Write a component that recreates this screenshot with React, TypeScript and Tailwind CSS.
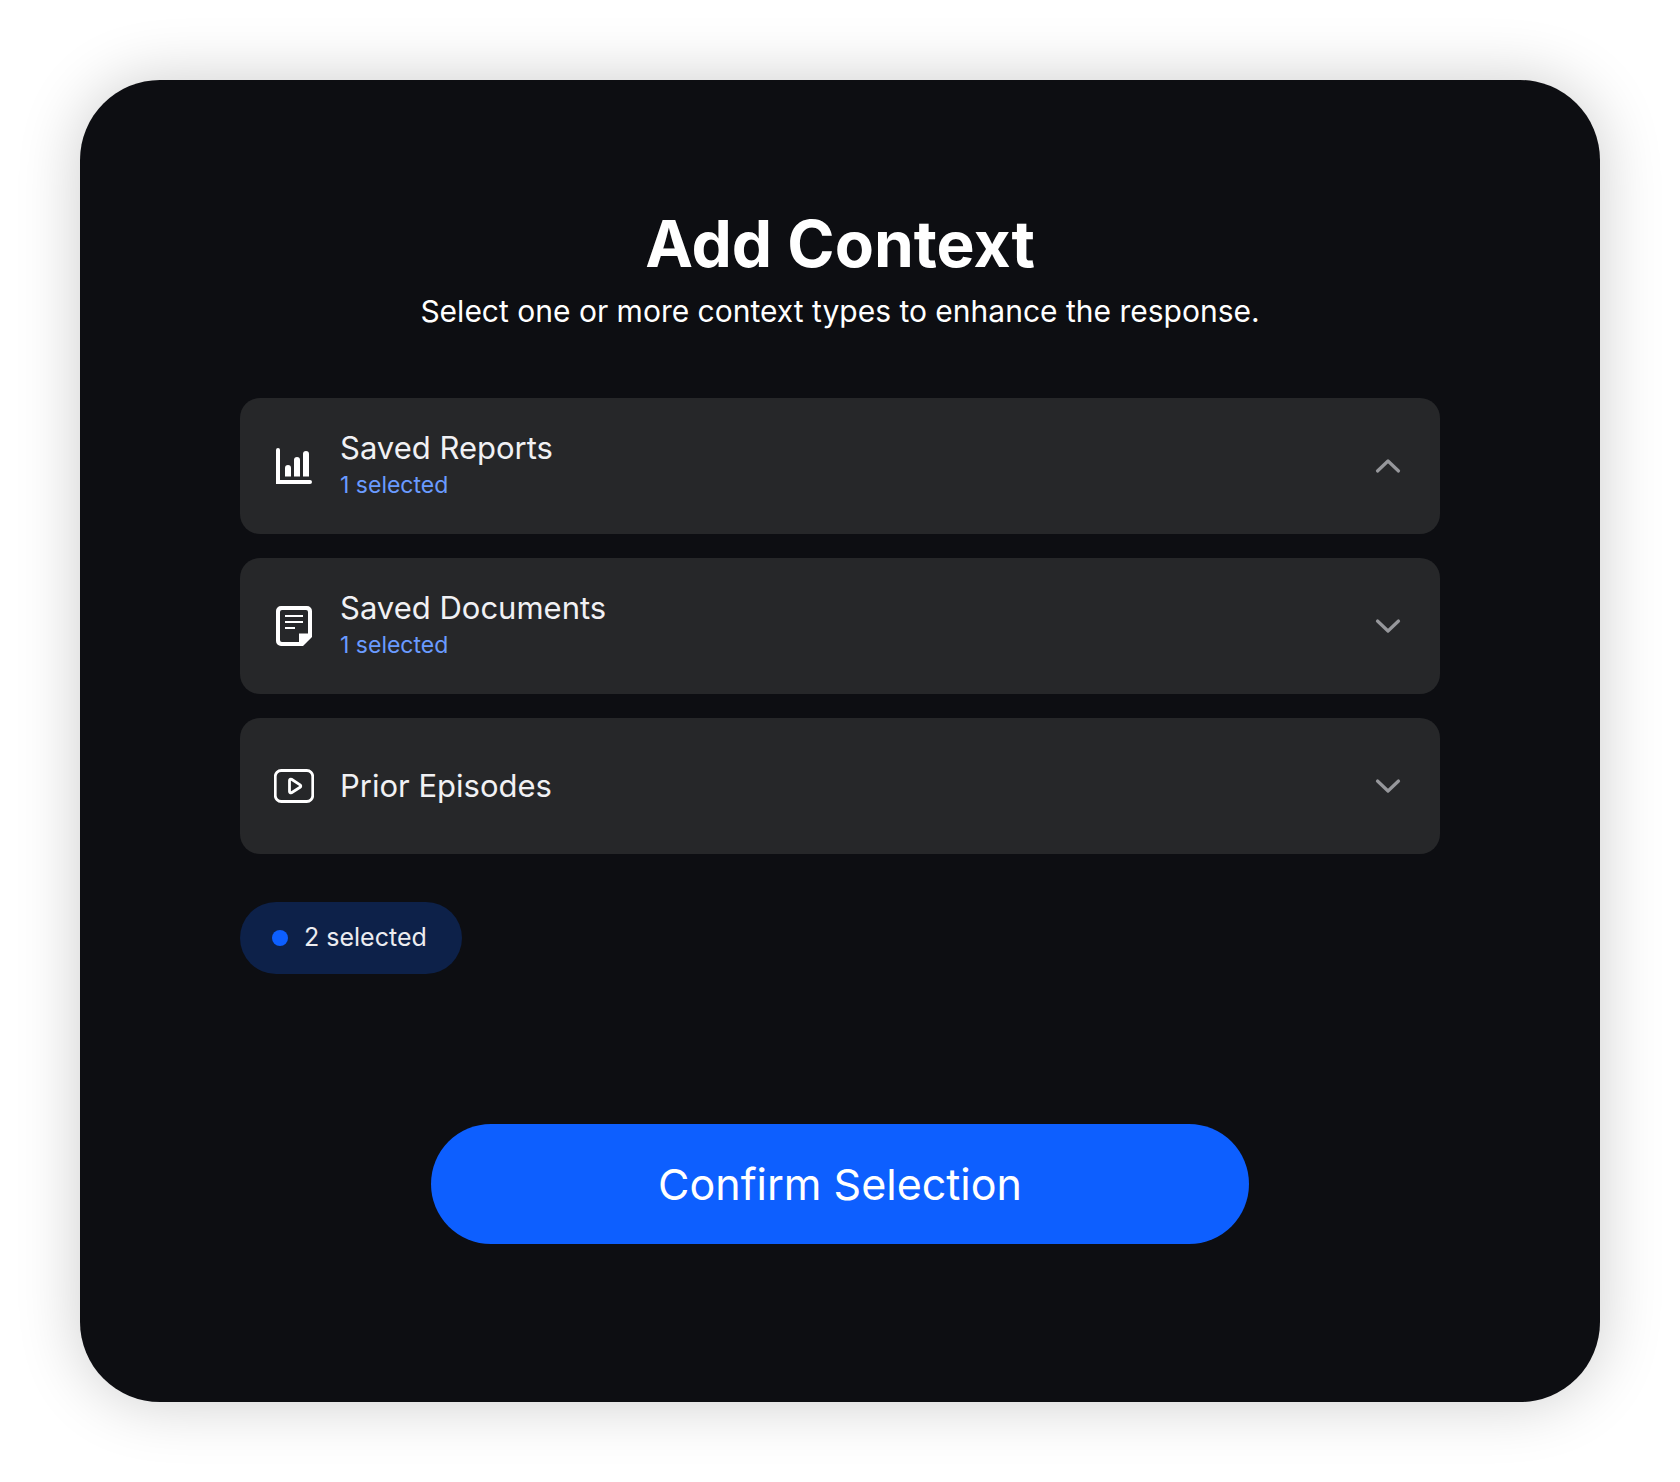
import { useState } from "react";
import type { ReactNode } from "react";

function ReportsIcon() {
  return (
    <svg viewBox="0 0 40 40" className="size-10 shrink-0" fill="none" aria-hidden="true">
      <path d="M2 4a2 2 0 0 1 4 0v30h30a2 2 0 0 1 0 4H2z" fill="#fff" />
      <path
        d="M11 30.5V22a3 3 0 0 1 6 0v8.5zM20 30.5V14a3 3 0 0 1 6 0v16.5zM29 30.5V8a3 3 0 0 1 6 0v22.5z"
        fill="#fff"
      />
    </svg>
  );
}

function DocumentsIcon() {
  return (
    <svg viewBox="0 0 40 40" className="size-10 shrink-0" fill="none" aria-hidden="true">
      <path
        fillRule="evenodd"
        d="M7 0h26a5 5 0 0 1 5 5v26l-9 9H7a5 5 0 0 1-5-5V5a5 5 0 0 1 5-5zM8 4a2 2 0 0 0-2 2v28a2 2 0 0 0 2 2h17v-8.500h9V6a2 2 0 0 0-2-2z"
        fill="#fff"
      />
      <path d="M11 10h18M11 16h18M11 22h10" stroke="#fff" strokeWidth="2" />
    </svg>
  );
}

function EpisodesIcon() {
  return (
    <svg viewBox="0 0 40 40" className="size-10 shrink-0" fill="none" aria-hidden="true">
      <rect x="1.25" y="4.5" width="37.5" height="31" rx="6" stroke="#fff" strokeWidth="2.8" />
      <path
        d="M15.5 14.4v11.2c0 1.1 1.1 1.7 2 1.1l8.6-5.4c.9-.6.9-1.9 0-2.5l-8.6-5.5c-.9-.6-2 0-2 1.1z"
        stroke="#fff"
        strokeWidth="2.8"
        strokeLinejoin="round"
      />
    </svg>
  );
}

function Chevron({ open }: { open: boolean }) {
  return (
    <svg viewBox="0 0 32 32" className="size-8 shrink-0" fill="none" aria-hidden="true">
      <path
        d={open ? "M5.5 21L16 11l10.5 10" : "M5.5 11L16 21l10.5-10"}
        stroke="#96979b"
        strokeWidth="3.2"
        strokeLinecap="round"
        strokeLinejoin="round"
      />
    </svg>
  );
}

type Section = { title: string; count: number; icon: ReactNode };

const sections: Section[] = [
  { title: "Saved Reports", count: 1, icon: <ReportsIcon /> },
  { title: "Saved Documents", count: 1, icon: <DocumentsIcon /> },
  { title: "Prior Episodes", count: 0, icon: <EpisodesIcon /> },
];

export default function App() {
  const [openIndex, setOpenIndex] = useState(0);
  const total = sections.reduce((sum, s) => sum + s.count, 0);

  return (
    <div className="min-h-screen bg-white p-20 font-['Inter',sans-serif]">
      <main className="flex flex-col rounded-[80px] bg-[#0d0e12] px-40 pt-[125px] pb-[158px] text-white shadow-[0_0_64px_rgba(0,0,0,0.2)]">
        <header className="text-center">
          <h1 className="text-[64px] leading-[78px] font-bold">Add Context</h1>
          <p className="mt-2 text-[30px] leading-10">
            Select one or more context types to enhance the response.
          </p>
        </header>

        <div className="mt-[67px] flex flex-col gap-6">
          {sections.map((section, i) => (
            <button
              key={section.title}
              type="button"
              aria-expanded={i === openIndex}
              onClick={() => setOpenIndex(i === openIndex ? -1 : i)}
              className="flex h-[136px] items-center rounded-[20px] bg-[#262729] pr-9 pl-[34px] text-left"
            >
              {section.icon}
              <span className="ml-[26px] flex flex-1 flex-col">
                <span className="text-[31px] leading-[38px] text-[#f1f1f4]">{section.title}</span>
                {section.count > 0 && (
                  <span className="text-[23px] leading-9 text-[#6a9bff]">{section.count} selected</span>
                )}
              </span>
              <Chevron open={i === openIndex} />
            </button>
          ))}
        </div>

        <div className="mt-12 flex h-[72px] min-w-[222px] items-center gap-4 self-start rounded-full bg-[#0d2149] px-8">
          <span className="size-4 rounded-full bg-[#0d5fff]" />
          <span className="text-[25px] text-[#ececf0]">{total} selected</span>
        </div>

        <button
          type="button"
          className="mt-[150px] h-[120px] w-full max-w-[818px] self-center rounded-full bg-[#0d5fff] text-[43px]"
        >
          Confirm Selection
        </button>
      </main>
    </div>
  );
}
